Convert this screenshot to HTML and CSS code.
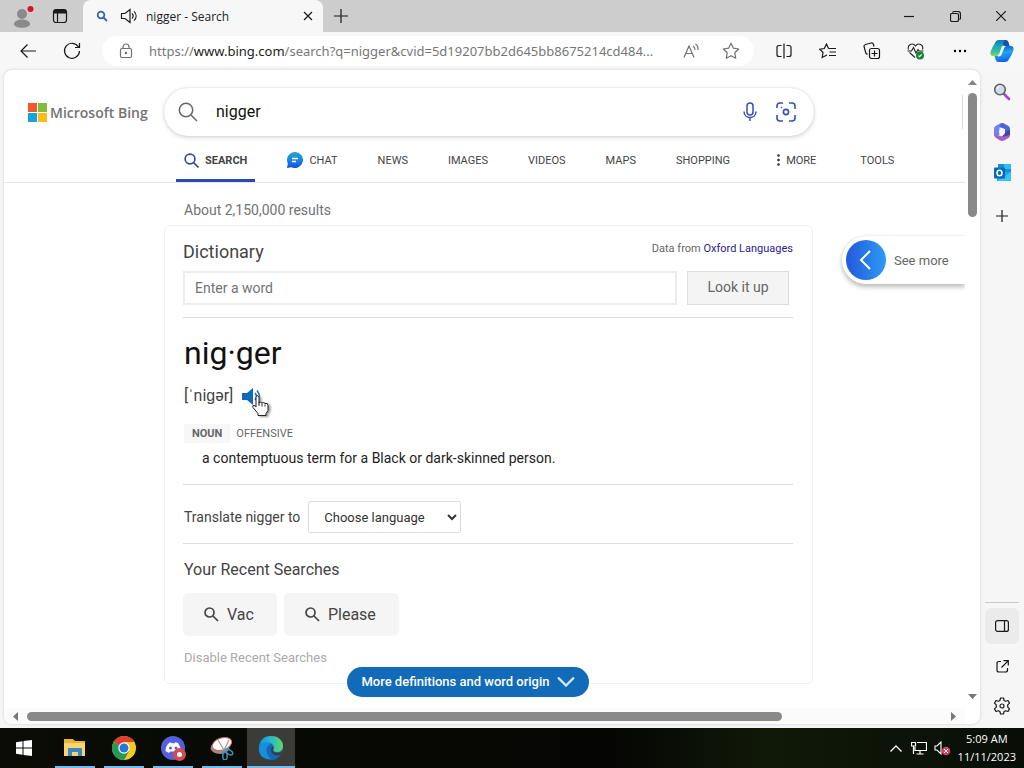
FILE: index.html
```
<!DOCTYPE html>
<html lang="en">
<head>
<meta charset="utf-8">
<title>nigger - Search</title>
<link rel="stylesheet" href="styles.css">
</head>
<body>
<div class="tabbar">
  <button class="profile" aria-label="Profile"><svg width="22" height="24" viewBox="0 0 22 24"><circle cx="10" cy="9" r="5" fill="#8a8a8a"/><path d="M2 19c0-6 16-6 16 0 0 5-16 5-16 0z" fill="#8a8a8a"/><circle cx="18.500" cy="4" r="3" fill="#d4122c"/></svg></button>
  <button class="workspaces" aria-label="Tab actions"><svg class="line" width="16" height="16" viewBox="0 0 16 16"><rect x="1.500" y="1.500" width="13" height="13" rx="2.500"/><path d="M2 3h12M2 4.500h12" stroke-width="2"/><path d="M5.500 5v9"/></svg></button>
  <div class="tab">
    <svg width="12" height="12" viewBox="0 0 12 12" fill="none" stroke="#3468b5" stroke-width="1.800"><circle cx="5" cy="5" r="3.300"/><path d="M7.500 7.500l3.500 3.500"/></svg>
    <svg class="line tab-audio" width="18" height="16" viewBox="0 0 18 16"><path d="M1.500 5.500H5l5-4v13l-5-4H1.500zM12 5.500c1.400 1.500 1.400 3.500 0 5M14 3.300c2.800 2.800 2.800 6.600 0 9.400"/></svg>
    <span class="tab-title">nigger - Search</span>
    <button aria-label="Close tab"><svg class="line" width="10" height="10" viewBox="0 0 10 10"><path d="M1 1l8 8M9 1L1 9"/></svg></button>
  </div>
  <button class="newtab" aria-label="New tab"><svg class="line" width="14" height="14" viewBox="0 0 14 14"><path d="M7 0v14M0 7h14"/></svg></button>
  <div class="window-controls">
    <button aria-label="Minimize"><svg class="line" width="10" height="10" viewBox="0 0 10 10"><path d="M0 5.500h10"/></svg></button>
    <button aria-label="Restore"><svg class="line" width="11" height="11" viewBox="0 0 11 11"><rect x=".5" y="2.500" width="8" height="8" rx="1.500"/><path d="M2.500 1.500Q3 .5 4.500.5h3.500Q10.500.5 10.500 3v4q0 1-1 1.500"/></svg></button>
    <button aria-label="Close"><svg class="line" width="10" height="10" viewBox="0 0 10 10"><path d="M0 0l10 10M10 0L0 10"/></svg></button>
  </div>
</div>

<div class="toolbar">
  <button aria-label="Back"><svg class="line" width="16" height="14" viewBox="0 0 16 14"><path d="M16 7H1M7.500.5L1 7l6.500 6.500"/></svg></button>
  <button aria-label="Refresh"><svg class="line" width="18" height="18" viewBox="0 0 18 18"><path d="M15.500 5A7.500 7.500 0 1 0 16.500 9M16.500 1v4.500H12"/></svg></button>
  <div class="address">
    <svg class="line muted" width="14" height="16" viewBox="0 0 14 16"><rect x="1.500" y="5.500" width="11" height="9" rx="1.500"/><path d="M4 5.500V4a3 3 0 0 1 6 0v1.500"/><circle cx="7" cy="10" r=".6" fill="#666"/></svg>
    <a class="url" href="#">https://<b>www.bing.com</b>/search?q=nigger&amp;cvid=5d19207bb2d645bb8675214cd484...</a>
    <button aria-label="Read aloud"><svg class="line muted" width="17" height="16" viewBox="0 0 17 16"><path d="M1 14.500L6 3l5 11.500M2.800 10.500h6.400M10 3q2 1.500 2 4M12.500 1Q15.500 3 15 7"/></svg></button>
    <button aria-label="Add to favorites"><svg class="line muted" width="18" height="18" viewBox="0 0 18 18"><path d="M9 1.300l2.400 4.900 5.300.8-3.900 3.800.9 5.400L9 13.700l-4.700 2.500.9-5.400L1.300 7l5.300-.8z" stroke-linejoin="round"/></svg></button>
  </div>
  <button aria-label="Split screen"><svg class="line" width="16" height="16" viewBox="0 0 16 16"><path d="M5.500 2.500H3Q1 2.500 1 4.500v7q0 2 2 2h2.500M8 .5v15M10.500 2.500H13q2 0 2 2v7q0 2-2 2h-2.500"/></svg></button>
  <button aria-label="Favorites"><svg class="line" width="18" height="16" viewBox="0 0 18 16"><path d="M9.500 5.500L7.500 1 5.300 5.500.8 6.200 4 9.500l-.8 5L8 12M9.500 5.500H17M10.500 9H17M10 12.500h7"/></svg></button>
  <button aria-label="Collections"><svg class="line" width="18" height="18" viewBox="0 0 18 18"><rect x="6.500" y="6.500" width="10" height="10" rx="2"/><path d="M11.500 8.500v6M8.500 11.500h6M4.500 12.500Q3 12 2.500 10L1 4.500Q.8 3 2.500 2.500L8 1q2-.3 2.500 1.500l.5 2"/></svg></button>
  <button aria-label="Browser essentials"><svg width="18" height="17" viewBox="0 0 18 17" fill="none" stroke="#222" stroke-width="1.100"><path d="M1.500 6.500C0 2 5.500-1 8.500 3c3-4 8.500-1 7 3.500M2.500 9.500l5.500 5M.5 8h4l2-3.500L9 10l2-3.500L12 8h4.500"/><circle cx="13" cy="12.500" r="4" fill="#118638" stroke="none"/><path d="M11.500 12.700l1 1 2.200-2.300" stroke="#fff"/></svg></button>
  <button aria-label="Settings and more"><svg width="14" height="4" viewBox="0 0 14 4"><circle cx="2" cy="2" r="1.200"/><circle cx="7" cy="2" r="1.200"/><circle cx="12" cy="2" r="1.200"/></svg></button>
  <button class="copilot" aria-label="Copilot"><svg width="24" height="22" viewBox="0 0 24 22"><defs><linearGradient id="cpa" x2="0" y2="1"><stop stop-color="#1474b8"/><stop offset=".35" stop-color="#1ba6c0"/><stop offset=".7" stop-color="#35bd9a"/><stop offset="1" stop-color="#8bd45f"/></linearGradient><linearGradient id="cpb" x2=".2" y2="1"><stop stop-color="#1450b8"/><stop offset=".5" stop-color="#20a5f5"/><stop offset="1" stop-color="#1763e8"/></linearGradient></defs><path d="M5 3Q6 0 9 0h6.500q2.500 0 3 2.500l1 3.500h-5q-2 0-2.500 2l-2.500 6Q9 16 7 16H3q-3 0-2.500-4Q2 7 5 3z" fill="url(#cpa)"/><path d="M19 19q-1 3-4 3H8.500Q6 22 5.500 19.500l-1-3.500h4q2.500 0 3-2l2.500-6q.5-2 3-2h4q3 0 2.500 4-1.500 5-4.500 9z" fill="url(#cpb)"/><path d="M12 7.500q.5-1.500 2-1.500h1q-1 .5-1.500 2L11 14q-.5 2-2.500 2H8q1.500-.5 2-2z" fill="#f0fffb" stroke="#e5fff8" stroke-width="1.200"/><path d="M15 0h.5Q18 0 18.500 2.500l1 3.500h-5Q12.500 5 13.500 2 14 .2 15 0z" fill="#1450ac"/></svg></button>
</div>

<div class="workspace">
  <div class="page">
    <main class="content">
      <header class="header">
        <a class="logo" href="#"><svg width="19" height="19" viewBox="0 0 19 19"><path fill="#f05a28" d="M0 0h9v9H0z"/><path fill="#80bb3f" d="M10 0h9v9h-9z"/><path fill="#14a5df" d="M0 10h9v9H0z"/><path fill="#fbbc18" d="M10 10h9v9h-9z"/></svg>Microsoft Bing</a>
        <form class="searchbox">
          <svg width="20" height="20" viewBox="0 0 20 20" fill="none" stroke="#666" stroke-width="1.500"><circle cx="8" cy="8" r="6.700"/><path d="M13 13l6 6"/></svg>
          <input class="query" type="text" value="nigger" aria-label="Search">
          <button type="button" aria-label="Search by voice"><svg width="14" height="20" viewBox="0 0 14 20" fill="none" stroke="#364fba" stroke-width="1.500"><rect x="4" y="1" width="6" height="12" rx="3"/><path d="M1 9.500c0 8 12 8 12 0M7 16v3"/></svg></button>
          <button type="button" aria-label="Search by image"><svg width="20" height="20" viewBox="0 0 20 20" fill="none" stroke="#364fba" stroke-width="1.600"><path d="M1 6V4q0-3 3-3h3M13 1h3q3 0 3 3v3M19 13v3q0 3-3 3h-3M7 19H4q-3 0-3-3v-3"/><circle cx="10" cy="10" r="2.600"/><circle cx="5.500" cy="5.500" r=".8" fill="#364fba" stroke="none"/></svg></button>
        </form>
        <span class="header-edge"></span>
      </header>
      <nav class="nav">
        <a class="nav-search" href="#"><svg width="15" height="15" viewBox="0 0 15 15" fill="none" stroke="#2a48b8" stroke-width="1.600"><circle cx="6" cy="6" r="4.900"/><path d="M9.500 9.500l5 5"/></svg>SEARCH</a>
        <a class="nav-chat" href="#"><svg width="16" height="16" viewBox="0 0 16 16"><defs><linearGradient id="chat" x2="0" y2="1"><stop stop-color="#29a6c4"/><stop offset=".5" stop-color="#1687e6"/><stop offset="1" stop-color="#174ddd"/></linearGradient></defs><path d="M8 0a8 8 0 1 1-3.500 15.200L0 16l.8-4.500A8 8 0 0 1 8 0z" fill="url(#chat)"/><path d="M5 6.500h6M5 9.500h4" stroke="#fff" stroke-width="1.300"/></svg>CHAT</a>
        <a href="#">NEWS</a><a href="#">IMAGES</a><a href="#">VIDEOS</a><a href="#">MAPS</a><a href="#">SHOPPING</a>
        <a class="nav-more" href="#"><svg width="3" height="12" viewBox="0 0 3 12" fill="#333"><circle cx="1.500" cy="1.500" r="1.300"/><circle cx="1.500" cy="6" r="1.300"/><circle cx="1.500" cy="10.500" r="1.300"/></svg>MORE</a>
        <a class="nav-tools" href="#">TOOLS</a>
      </nav>
      <div class="results">
        <div class="column">
          <p class="count">About 2,150,000 results</p>
          <section class="card">
            <div class="card-head"><h2>Dictionary</h2><span class="source">Data from <a href="#">Oxford Languages</a></span></div>
            <form class="lookup"><input type="text" placeholder="Enter a word" aria-label="Enter a word"><button type="button">Look it up</button></form>
            <div class="entry">
              <h1>nig·ger</h1>
              <div class="pron"><span>[ˈniɡər]</span>
                <button class="speak" aria-label="Listen"><svg width="20" height="18" viewBox="0 0 20 18"><path d="M0 5h5l6-5v17l-6-5H0z" fill="#1269bb"/><path d="M13 5q3 3.500 0 7M15 2.500q5 6 0 12" fill="none" stroke="#1269bb" stroke-width="1.500"/></svg>
                <svg class="cursor" width="20" height="24" viewBox="0 0 20 24"><path d="M5 2.500q2-2 3 .5V9q2-1.500 3 0 2-1 3 .5 3-1 3 2v5l-2 3v2H7v-2l-5-6q-1-2 1-2.300l2 1.800z" fill="#fff" stroke="#222"/><path d="M8 8v4M11 9.500v3M14 10.500v2" stroke="#222"/></svg></button>
              </div>
              <div class="tags"><b>NOUN</b><span>OFFENSIVE</span></div>
              <p class="definition">a contemptuous term for a Black or dark-skinned person.</p>
            </div>
            <div class="translate"><label for="language">Translate nigger to</label><select id="language"><option>Choose language</option></select></div>
            <div class="recent">
              <h3>Your Recent Searches</h3>
              <div class="chips">
                <a href="#"><svg width="15" height="15" viewBox="0 0 15 15" fill="none" stroke="#444" stroke-width="1.700"><circle cx="5.500" cy="5.500" r="4.500"/><path d="M9 9l5 5"/></svg>Vac</a>
                <a href="#"><svg width="15" height="15" viewBox="0 0 15 15" fill="none" stroke="#444" stroke-width="1.700"><circle cx="5.500" cy="5.500" r="4.500"/><path d="M9 9l5 5"/></svg>Please</a>
              </div>
              <a class="disable" href="#">Disable Recent Searches</a>
            </div>
            <button class="expand">More definitions and word origin<svg width="18" height="11" viewBox="0 0 18 11" fill="none" stroke="#d5e8fa" stroke-width="2.400"><path d="M1 1.500l8 8 8-8"/></svg></button>
          </section>
        </div>
        <button class="see-more"><svg width="40" height="40" viewBox="0 0 40 40"><defs><linearGradient id="more"><stop stop-color="#2458dc"/><stop offset="1" stop-color="#2e9af4"/></linearGradient></defs><circle cx="20" cy="20" r="20" fill="url(#more)"/><path d="M24 11l-9 9 9 9" fill="none" stroke="#fff" stroke-width="2"/></svg>See more</button>
      </div>
    </main>
    <div class="vscroll"><svg width="9" height="5" viewBox="0 0 9 5"><path d="M0 5l4.500-5L9 5z" fill="#858585"/></svg><span class="vthumb"></span><svg width="9" height="5" viewBox="0 0 9 5"><path d="M0 0l4.500 5L9 0z" fill="#777"/></svg></div>
    <div class="hscroll"><svg width="5" height="9" viewBox="0 0 5 9"><path d="M5 0L0 4.500 5 9z" fill="#777"/></svg><span class="htrack"><span class="hthumb"></span></span><svg width="5" height="9" viewBox="0 0 5 9"><path d="M0 0l5 4.500L0 9z" fill="#777"/></svg></div>
  </div>
  <aside class="sidebar">
    <button aria-label="Search"><svg width="18" height="18" viewBox="0 0 18 18"><path d="M10.500 10.500l2 2" stroke="#555" stroke-width="2"/><path d="M12 12l4 4" stroke="#a445cf" stroke-width="2.600" stroke-linecap="round"/><circle cx="7" cy="6.500" r="5.300" fill="#cfdfe5" stroke="#626262" stroke-width="1.600"/><path d="M4 6q.5-2 2.500-2.500" stroke="#fff" fill="none"/></svg></button>
    <button aria-label="Microsoft 365"><svg width="18" height="18" viewBox="0 0 18 18"><path d="M1 5.500Q1 4 2.500 3L7 .6q2-1 4 0L6.500 4v8L1 12.500z" fill="#7183ec"/><path d="M8 .5q1-.8 3 0l4.500 2.600Q17 4 17 6v5.500L12 9V6L6 4z" fill="#4a63d8"/><path d="M17 8v4q0 2-1.500 3L11 17.500q-2 .8-4 0l-4.500-3Q1 13.500 1 11l5 1.500 3 1z" fill="#a45fca"/><path d="M17 7v5L9 14l3-5z" fill="#4a459c"/><circle cx="9" cy="9" r="3" fill="#f4f5ff"/></svg></button>
    <button aria-label="Outlook"><svg width="17" height="17" viewBox="0 0 17 17"><rect x="4" width="13" height="9" fill="#1590df"/><path d="M10 0h7v5h-7z" fill="#30bdf0"/><path d="M3 8h14v9H3z" fill="#1ba5e8"/><path d="M3 17l14-9v9z" fill="#35c5f1"/><rect y="3.500" width="11" height="11" rx="1" fill="#0869ba"/><ellipse cx="5.500" cy="9" rx="2.500" ry="2.800" fill="none" stroke="#fff" stroke-width="1.500"/></svg></button>
    <button aria-label="Customize"><svg class="line" width="12" height="12" viewBox="0 0 12 12"><path d="M6 0v12M0 6h12"/></svg></button>
    <div class="side-bottom">
      <button class="active" aria-label="Hide sidebar"><svg class="line" width="14" height="12" viewBox="0 0 14 12"><rect x=".6" y=".6" width="12.800" height="10.800" rx="2"/><path d="M9.500 1v10"/></svg></button>
      <button aria-label="Open in new window"><svg class="line" width="13" height="13" viewBox="0 0 13 13"><path d="M5 1.500H3Q1 1.500 1 3.500v6.500q0 2 2 2h6.500q2 0 2-2V8M7.500.7h4.800v4.800M12.300.7L5.500 7.500"/></svg></button>
      <button aria-label="Settings"><svg class="line" width="18" height="18" viewBox="0 0 18 18"><path d="M7.500 1h3l.6 2.500 1.500.8 2.400-.8 1.500 2.600-1.800 1.800v2.200l1.800 1.800-1.500 2.600-2.400-.8-1.500.8-.6 2.500h-3l-.6-2.500-1.500-.8-2.400.8-1.500-2.600 1.800-1.800V7.900L1.500 6.100 3 3.500l2.400.8 1.500-.8z" stroke-linejoin="round"/><circle cx="9" cy="9" r="2"/></svg></button>
    </div>
  </aside>
</div>

<footer class="taskbar">
  <button class="start" aria-label="Start"><svg width="16" height="16" viewBox="0 0 16 16" fill="#fff"><path d="M0 2.200l6.500-.9v6.200H0zM7.500 1.100L16 0v7.500H7.500zM0 8.500h6.500v6.200L0 13.800zM7.500 8.500H16V16l-8.500-1.100z"/></svg></button>
  <button class="app" aria-label="File Explorer"><svg width="22" height="20" viewBox="0 0 22 20"><path d="M0 1h9l2 2h10v15H0z" fill="#e9b338"/><path d="M0 5h21v13H0z" fill="#fbd56b"/><path d="M4 10h14v8h-4v-4H8v4H4z" fill="#3b86c6"/></svg></button>
  <button class="app" aria-label="Chrome"><svg width="24" height="24" viewBox="0 0 24 24"><circle cx="12" cy="12" r="12" fill="#f8c91d"/><path d="M12 12L1.600 6A12 12 0 0 1 22.400 6z" fill="#df3f32"/><path d="M1.600 6A12 12 0 0 0 12 24l5.200-9L12 12z" fill="#249b52"/><path d="M12 6h10.400L17 15z" fill="#f8c91d"/><circle cx="12" cy="12" r="5.700" fill="#fff"/><circle cx="12" cy="12" r="4.500" fill="#2875df"/></svg></button>
  <button class="app" aria-label="Discord"><svg width="25" height="25" viewBox="0 0 25 25"><circle cx="12" cy="12" r="12" fill="#5361dd"/><path d="M8 7l2-.7.7 1h3l.7-1 2.600.8q3 4 2.500 8l-3.500 2-1-1.600H9l-1 1.600L4.500 15q0-5 3.500-8z" fill="#fff"/><circle cx="9.500" cy="12" r="1.500" fill="#5361dd"/><circle cx="15" cy="12" r="1.500" fill="#5361dd"/><circle cx="18.500" cy="18.500" r="6.500" fill="#d84b50"/><circle cx="18.500" cy="18.500" r="2.500" fill="#fff"/></svg></button>
  <button class="app" aria-label="Snipping Tool"><svg width="24" height="24" viewBox="0 0 24 24"><ellipse cx="10" cy="12" rx="9.500" ry="6" fill="#9c8988"/><ellipse cx="12" cy="8" rx="10" ry="6" fill="#fff" stroke="#d66b60" transform="rotate(-18 12 8)"/><path d="M8 4l6 10M19 4l-5 10" stroke="#a99" stroke-width="1.300"/><g fill="none" stroke="#3a98ba" stroke-width="1.500"><ellipse cx="19" cy="16" rx="4" ry="2.200" transform="rotate(30 19 16)"/><ellipse cx="15" cy="20" rx="2.200" ry="4"/></g></svg></button>
  <button class="app current" aria-label="Microsoft Edge"><svg width="24" height="24" viewBox="0 0 24 24"><defs><linearGradient id="edge" x2="1" y2="0"><stop stop-color="#168ed4"/><stop offset=".5" stop-color="#2bb9c6"/><stop offset="1" stop-color="#63d765"/></linearGradient></defs><circle cx="12" cy="12" r="12" fill="#1269b9"/><path d="M0 11C1 3 6 0 12 0c8 0 12 5 12 10 0 4-3 6-6 6-4 0-5-2-3-4 0-4-4-6-8-5S1 9 0 11z" fill="url(#edge)"/><path d="M0 11c2-5 9-6 12-3-5 1-7 9 0 15C4 24-1 18 0 11z" fill="#178fd9"/><path d="M15 12c-2 2 0 5 3 5 2 0 4-1 5.500-2L22 19c-7 2-12-3-9-8z" fill="#3b3c38"/></svg></button>
  <div class="tray">
    <svg width="12" height="7" viewBox="0 0 12 7" fill="none" stroke="#fff" stroke-width="1.300"><path d="M.5 6.500L6 1l5.500 5.500"/></svg>
    <svg width="16" height="14" viewBox="0 0 16 14" fill="none" stroke="#fff" stroke-width="1.200"><path d="M6 1.500h9.500v8H4V6M9 9.500v3M5.500 13h7M.5 1.500h4V5h-4zM2.500 5v8"/></svg>
    <svg width="17" height="15" viewBox="0 0 17 15"><path d="M1 5h2l4-4v12L3 9H1z" fill="none" stroke="#fff" stroke-width="1.100"/><circle cx="12" cy="10" r="4.300" fill="#d64260"/><path d="M10 8l4 4M14 8l-4 4" stroke="#fff"/></svg>
    <div class="clock"><span>5:09 AM</span><span>11/11/2023</span></div>
  </div>
</footer>
</body>
</html>
```
FILE: styles.css
```
* { box-sizing: border-box; }
body { margin: 0; height: 100vh; display: flex; flex-direction: column; overflow: hidden; background: #f6f6f6; color: #444; font-family: Roboto, sans-serif; font-size: 14px; }
button { font: inherit; color: inherit; border: 0; padding: 0; background: none; display: flex; align-items: center; justify-content: center; }
a { color: inherit; text-decoration: none; }
h1, h2, h3, p { margin: 0; font-weight: 400; }
svg { flex: none; display: block; }
input { font: inherit; min-width: 0; }
.line { fill: none; stroke: #191919; stroke-width: 1.2; }
.muted { stroke: #707070; }

.tabbar { height: 32px; flex: none; display: flex; background: #cdcdcd; font-family: "Open Sans", sans-serif; }
.profile { width: 46px; padding-top: 2px; }
.workspaces { width: 37px; padding-right: 9px; }
.tab { width: 240px; display: flex; align-items: center; padding: 0 10px 0 13px; background: #f7f7f7; border-radius: 8px 8px 0 0; font-size: 12px; color: #222; }
.tab-audio { margin-left: 12px; }
.tab-title { flex: 1; margin-left: 8px; }
.newtab { width: 36px; }
.window-controls { display: flex; margin-left: auto; }
.window-controls button { width: 46px; }

.toolbar { height: 38px; flex: none; display: flex; align-items: center; padding-left: 6px; background: #f7f7f7; }
.toolbar > button { width: 44px; height: 36px; flex: none; }
.toolbar > .copilot { width: 42px; padding-right: 2px; }
.address { flex: 1; min-width: 0; height: 30px; display: flex; align-items: center; margin: 0 8px; padding: 0 4px 0 17px; background: #fff; border-radius: 15px; }
.url { flex: 1; min-width: 0; margin-left: 16px; white-space: nowrap; overflow: hidden; font-family: "Noto Sans", sans-serif; font-size: 13px; color: #777; }
.url b { font-weight: 400; color: #222; }
.address button { width: 39px; height: 30px; flex: none; }

.workspace { flex: 1; min-height: 0; display: flex; padding-left: 4px; background: #f6f6f6; }
.page { flex: 1; min-width: 0; margin-bottom: 4px; display: grid; grid-template: minmax(0, 1fr) 16px / minmax(0, 1fr) 15px; background: #fff; border-radius: 8px; box-shadow: 0 0 3px #ccc; }
.content { overflow: hidden; border-radius: 8px 0 0 0; }
.header { display: flex; align-items: center; padding-top: 18px; padding-left: 24px; }
.logo { width: 136px; flex: none; display: flex; align-items: center; gap: 3px; font: 600 14px "Open Sans", sans-serif; color: #737373; white-space: nowrap; }
.searchbox { width: 650px; height: 48px; display: flex; align-items: center; padding: 0 17px 0 14px; border-radius: 24px; box-shadow: 0 0 2px #ccc, 0 2px 5px #ddd; }
.query { flex: 1; margin-left: 16px; padding: 0 2px 2px; border: 0; outline: 0; font-size: 16px; color: #111; }
.searchbox button { width: 22px; height: 32px; }
.searchbox button + button { margin-left: 14px; }
.header-edge { width: 1px; height: 34px; margin-left: auto; margin-right: 2px; background: #ddd; }

.nav { height: 47px; display: flex; align-items: center; gap: 40px; padding-left: 172px; border-bottom: 1px solid #e8e8e8; font-size: 11px; color: #444; }
.nav a { display: flex; align-items: center; gap: 8px; height: 100%; padding-top: 2px; white-space: nowrap; }
.nav .nav-search { gap: 6px; padding: 2px 8px 0; border-bottom: 3px solid #2b48b5; border-top: 3px solid transparent; font-weight: 700; }
.nav .nav-chat { gap: 6px; margin-left: -8px; }
.nav .nav-more { gap: 6px; margin-left: 7px; }
.nav .nav-tools { margin-left: 4px; }

.results { display: flex; align-items: flex-start; padding-left: 160px; }
.column { width: 649px; flex: none; }
.count { height: 42px; padding: 17px 20px 0; line-height: 20px; color: #737373; }
.card { position: relative; height: 459px; padding: 0 19px 0 18px; border: 1px solid #f0f0f0; border-radius: 6px; }
.card-head { height: 45px; display: flex; justify-content: space-between; align-items: center; padding-top: 6px; }
h2 { font-size: 18px; }
.source { font-size: 11px; color: #666; padding-bottom: 7px; }
.source a { color: #2b1a91; }
.lookup { display: flex; gap: 10px; padding: 0 4px 12px 0; border-bottom: 1px solid #ddd; }
.lookup input { flex: 1; height: 34px; padding: 0 10px; border: 2px solid #ececec; color: #444; }
.lookup input::placeholder { color: #737373; }
.lookup button { width: 102px; height: 34px; padding-bottom: 2px; background: #f4f4f4; border: 1px solid #ddd; color: #666; }
.entry { height: 167px; padding-left: 1px; border-bottom: 1px solid #ddd; }
h1 { padding-top: 15px; font-size: 32px; line-height: 40px; color: #111; }
.pron { display: flex; align-items: center; gap: 9px; height: 44px; font-size: 16px; }
.speak { position: relative; padding-top: 4px; }
.cursor { position: absolute; left: 9px; top: 10px; filter: drop-shadow(2px 1px 1px #999); }
.tags { display: flex; align-items: center; gap: 6px; height: 31px; padding-top: 2px; font-size: 11px; color: #666; }
.tags b { padding: 3px 8px; background: #f7f7f7; }
.definition { padding-left: 18px; line-height: 20px; color: #222; }
.translate { height: 59px; display: flex; align-items: center; gap: 8px; padding-top: 6px; padding-left: 1px; border-bottom: 1px solid #ddd; }
.translate select { width: 153px; height: 32px; padding: 0 0 0 11px; background: #fff; border: 1px solid #ddd; border-radius: 2px; font: 13px Roboto, sans-serif; color: #333; }
.recent h3 { padding-top: 16px; padding-left: 1px; font-size: 16px; line-height: 20px; }
.chips { display: flex; gap: 7px; padding-top: 13px; }
.chips a { height: 43px; display: flex; align-items: center; gap: 8px; padding: 0 23px 0 21px; background: #f5f5f5; border-radius: 5px; font-size: 16px; }
.disable { display: block; padding-top: 12px; padding-left: 1px; line-height: 20px; font-size: 13px; color: #aaa; }
.expand { position: absolute; bottom: -14px; left: 182px; width: 242px; height: 30px; padding-bottom: 1px; gap: 7px; background: #116bb9; border-radius: 15px; color: #fff; font-size: 13px; font-weight: 500; white-space: nowrap; }
.see-more { flex: 1; height: 48px; margin-top: 53px; margin-left: 29px; padding-left: 4px; justify-content: flex-start; gap: 8px; background: #fff; border-radius: 24px 0 0 24px; box-shadow: 0 3px 5px #bbb, 0 0 2px #ddd; color: #666; font-size: 13px; white-space: nowrap; }

.vscroll { display: flex; flex-direction: column; align-items: center; padding: 10px 0 9px; }
.vscroll svg:last-child { margin-top: auto; }
.vthumb { width: 9px; height: 20%; margin-top: 8px; border-radius: 5px; background: #898989; }
.hscroll { grid-column: 1 / 3; width: calc(100% - 15px); display: flex; align-items: center; padding: 0 9px; background: #fbfbfb; border-radius: 0 0 0 8px; }
.htrack { flex: 1; margin: 0 9px; }
.hthumb { display: block; width: 82.5%; height: 9px; border-radius: 5px; background: #898989; }

.sidebar { width: 44px; flex: none; display: flex; flex-direction: column; align-items: center; }
.sidebar button { width: 34px; height: 36px; margin: 2px 0; border-radius: 6px; }
.sidebar > button:first-child { margin-top: 4px; }
.sidebar > button:nth-child(4) { margin-top: 6px; }
.side-bottom { display: flex; flex-direction: column; margin-top: auto; padding-top: 3px; border-top: 1px solid #c9c9c9; margin-bottom: 2px; }
.side-bottom .active { background: #ebebeb; }

.taskbar { height: 40px; flex: none; display: flex; background: linear-gradient(90deg, #0a0c05, #050603 60%, #101908 75%, #080e06); color: #fff; }
.start { width: 48px; margin-right: 3px; }
.app { width: 48px; margin-right: 1px; position: relative; }
.app::after { content: ""; position: absolute; bottom: 0; left: 4px; right: 4px; height: 2px; background: #76b9ed; }
.current { background: #3b3c38; }
.current::after { left: 0; right: 0; }
.tray { display: flex; align-items: center; gap: 9px; margin-left: auto; padding-right: 8px; }
.tray svg + svg + svg { margin-left: -2px; }
.clock { margin-left: -2px; display: flex; flex-direction: column; align-items: center; font: 11px/18px "Open Sans", sans-serif; }
```
